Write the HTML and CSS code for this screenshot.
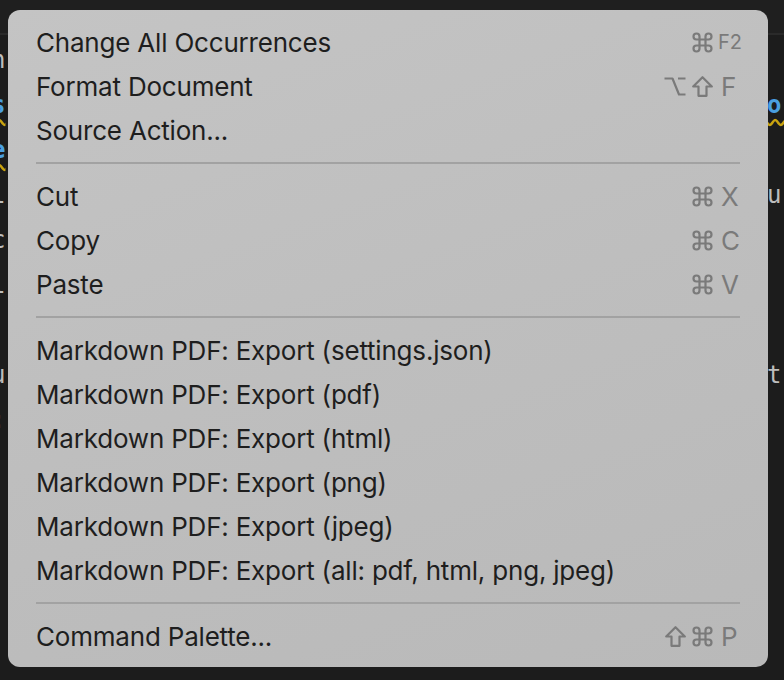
FILE: index.html
```html
<!DOCTYPE html>
<html>
<head>
<meta charset="utf-8">
<link rel="stylesheet" href="styles.css">
</head>
<body>
<div class="editor">
  <div class="tabbar"></div>
  <div class="code">
    <div class="line"><span class="c-gray">n</span><span></span></div>
    <div class="line"><span class="c-blue sq">s</span><span class="c-blue sq">or</span></div>
    <div class="line"><span class="c-blue sq">e</span><span></span></div>
    <div class="line"><span class="c-gray">l</span><span class="c-gray">u </span></div>
    <div class="line"><span class="c-gray">c</span><span></span></div>
    <div class="line"><span class="c-gray">l</span><span></span></div>
    <div class="line"><span></span><span></span></div>
    <div class="line"><span class="c-gray">u</span><span class="c-gray">t </span></div>
    <div class="line"><span class="c-gray">:</span><span></span></div>
  </div>

  <div class="menu">
    <div class="item"><span class="label">Change All Occurrences</span>
      <span class="keys">
        <span class="sym"><svg viewBox="0 0 21 21"><path d="M7.5 7.5V4.5a3 3 0 1 0-3 3H16.5a3 3 0 1 0-3-3V16.5a3 3 0 1 0 3-3H4.5a3 3 0 1 0 3 3Z"/></svg></span>
        <span class="key fkey">F2</span>
      </span>
    </div>
    <div class="item"><span class="label">Format Document</span>
      <span class="keys">
        <span class="sym wide"><svg viewBox="0 0 22 21"><path d="M0.5 2.5H8.5L15 18.5H21.5M14 2.5H21.5"/></svg></span>
        <span class="sym"><svg viewBox="0 0 21 21"><path d="M10.5 1.2L19.8 10.5H14.5V19.8H6.5V10.5H1.2Z"/></svg></span>
        <span class="key">F</span>
      </span>
    </div>
    <div class="item"><span class="label">Source Action...</span></div>
    <div class="sep"></div>
    <div class="item"><span class="label">Cut</span>
      <span class="keys">
        <span class="sym"><svg viewBox="0 0 21 21"><path d="M7.5 7.5V4.5a3 3 0 1 0-3 3H16.5a3 3 0 1 0-3-3V16.5a3 3 0 1 0 3-3H4.5a3 3 0 1 0 3 3Z"/></svg></span>
        <span class="key">X</span>
      </span>
    </div>
    <div class="item"><span class="label">Copy</span>
      <span class="keys">
        <span class="sym"><svg viewBox="0 0 21 21"><path d="M7.5 7.5V4.5a3 3 0 1 0-3 3H16.5a3 3 0 1 0-3-3V16.5a3 3 0 1 0 3-3H4.5a3 3 0 1 0 3 3Z"/></svg></span>
        <span class="key">C</span>
      </span>
    </div>
    <div class="item"><span class="label">Paste</span>
      <span class="keys">
        <span class="sym"><svg viewBox="0 0 21 21"><path d="M7.5 7.5V4.5a3 3 0 1 0-3 3H16.5a3 3 0 1 0-3-3V16.5a3 3 0 1 0 3-3H4.5a3 3 0 1 0 3 3Z"/></svg></span>
        <span class="key">V</span>
      </span>
    </div>
    <div class="sep"></div>
    <div class="item"><span class="label">Markdown PDF: Export (settings.json)</span></div>
    <div class="item"><span class="label">Markdown PDF: Export (pdf)</span></div>
    <div class="item"><span class="label">Markdown PDF: Export (html)</span></div>
    <div class="item"><span class="label">Markdown PDF: Export (png)</span></div>
    <div class="item"><span class="label">Markdown PDF: Export (jpeg)</span></div>
    <div class="item"><span class="label">Markdown PDF: Export (all: pdf, html, png, jpeg)</span></div>
    <div class="sep"></div>
    <div class="item"><span class="label">Command Palette...</span>
      <span class="keys">
        <span class="sym"><svg viewBox="0 0 21 21"><path d="M10.5 1.2L19.8 10.5H14.5V19.8H6.5V10.5H1.2Z"/></svg></span>
        <span class="sym"><svg viewBox="0 0 21 21"><path d="M7.5 7.5V4.5a3 3 0 1 0-3 3H16.5a3 3 0 1 0-3-3V16.5a3 3 0 1 0 3-3H4.5a3 3 0 1 0 3 3Z"/></svg></span>
        <span class="key">P</span>
      </span>
    </div>
  </div>
</div>
</body>
</html>
```

FILE: styles.css
```css
* { box-sizing: border-box; }
html, body { margin: 0; padding: 0; }
body { background: #1c1c1c; }

.editor {
  position: relative;
  width: 784px;
  height: 680px;
  overflow: hidden;
  background: #1c1c1c;
}

.tabbar {
  height: 35px;
  background: #1f1f1f;
  border-bottom: 2px solid #2a2a2a;
}

.code {
  padding-top: 3px;
  font-family: "DejaVu Sans Mono", monospace;
  font-size: 24px;
  line-height: 45px;
  color: #c8c8c8;
}

.line {
  display: flex;
  justify-content: space-between;
  height: 45px;
  margin: 0 -12px 0 -9px;
  white-space: pre;
}

.c-gray { color: #bdbdbd; }
.c-blue { color: #4a9fe0; font-weight: bold; }
.sq {
  text-decoration: underline wavy #c9a30f;
  text-underline-offset: 6px;
}

.menu {
  position: absolute;
  left: 8px;
  top: 10px;
  width: 760px;
  height: 657px;
  padding: 10px 0 9px;
  border-radius: 12px;
  background: linear-gradient(160deg, #c4c4c4 0%, #bebebe 50%, #b9b9b9 100%);
  font-family: Inter, "Noto Sans", sans-serif;
  font-size: 26px;
  color: #1e1e1e;
}

.item {
  display: flex;
  align-items: center;
  justify-content: space-between;
  height: 44px;
  padding: 0 28px 0 28px;
}

.label { white-space: nowrap; letter-spacing: -0.2px; }

.keys {
  display: flex;
  align-items: center;
  gap: 6px;
  color: #7a7a7a;
}

.sym {
  display: flex;
  width: 21px;
  height: 21px;
}
.sym.wide { width: 22px; }
.sym svg {
  width: 100%;
  height: 100%;
  fill: none;
  stroke: #7a7a7a;
  stroke-width: 2.2;
  stroke-linejoin: round;
}

.key {
  width: 19px;
  margin-left: 2px;
  text-align: left;
}
.fkey {
  width: 22px;
  margin-left: -1px;
  font-size: 20px;
}

.sep {
  height: 2px;
  margin: 10px 28px 10px 28px;
  background: #a2a2a2;
}
```
